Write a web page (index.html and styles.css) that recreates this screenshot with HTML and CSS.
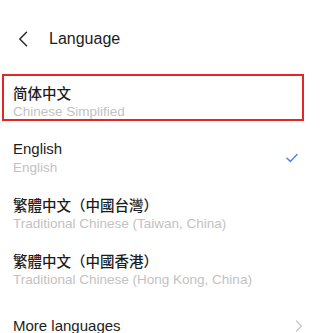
FILE: index.html
```html
<!DOCTYPE html>
<html lang="en">
<head>
<meta charset="utf-8">
<title>Language</title>
<link rel="stylesheet" href="styles.css">
</head>
<body>
<div class="screen">
  <header class="header">
    <svg class="back" width="10" height="16" viewBox="0 0 10 16" aria-hidden="true">
      <path d="M8.5 1.2 L1.8 8 L8.5 14.8" fill="none" stroke="#2a2a2a" stroke-width="1.5" stroke-linecap="round" stroke-linejoin="round"/>
    </svg>
    <h1 class="title">Language</h1>
  </header>
  <ul class="list">
    <li class="item">
      <div class="texts">
        <div class="name sc">简体中文</div>
        <div class="sub">Chinese Simplified</div>
      </div>
      <div class="highlight"></div>
    </li>
    <li class="item">
      <div class="texts">
        <div class="name">English</div>
        <div class="sub">English</div>
      </div>
      <svg class="check" width="12" height="10" viewBox="0 0 12 10" aria-hidden="true">
        <path d="M1 5.2 L4.4 8.4 L11 1.6" fill="none" stroke="#4f86e6" stroke-width="1.5" stroke-linecap="round" stroke-linejoin="round"/>
      </svg>
    </li>
    <li class="item">
      <div class="texts">
        <div class="name tc">繁體中文（中國台灣）</div>
        <div class="sub">Traditional Chinese (Taiwan, China)</div>
      </div>
    </li>
    <li class="item">
      <div class="texts">
        <div class="name tc">繁體中文（中國香港）</div>
        <div class="sub">Traditional Chinese (Hong Kong, China)</div>
      </div>
    </li>
    <li class="item more">
      <div class="texts">
        <div class="name">More languages</div>
      </div>
      <svg class="chev" width="8" height="12" viewBox="0 0 8 12" aria-hidden="true">
        <path d="M1.5 1 L6.5 6 L1.5 11" fill="none" stroke="#c8c8c8" stroke-width="1.3" stroke-linecap="round" stroke-linejoin="round"/>
      </svg>
    </li>
  </ul>
</div>
</body>
</html>
```

FILE: styles.css
```css
html, body {
  margin: 0;
  padding: 0;
  background: #ffffff;
}

body {
  font-family: "Liberation Sans", Arial, "Noto Sans CJK SC", sans-serif;
  color: #1f1f1f;
}

.screen {
  width: 312px;
  height: 333px;
  overflow: hidden;
}

.header {
  height: 74px;
  display: flex;
  align-items: flex-start;
  padding-top: 31px;
  box-sizing: border-box;
}

.back {
  margin-left: 18px;
  display: block;
}

.title {
  margin: -2px 0 0 21px;
  font-size: 16px;
  font-weight: normal;
  line-height: 20px;
  color: #1c1c1c;
}

.list {
  list-style: none;
  margin: 0;
  padding: 0;
}

.item {
  position: relative;
  display: flex;
  align-items: center;
  padding: 9px 14px 9px 13px;
  height: 38px;
}

.texts {
  flex: 1;
  min-width: 0;
}

.name {
  font-size: 15px;
  line-height: 20px;
  color: #1c1c1c;
  white-space: nowrap;
}

.sc {
  font-family: "Noto Sans CJK SC", "Liberation Sans", sans-serif;
  font-size: 14.5px;
  font-weight: 500;
}

.tc {
  font-family: "Noto Sans CJK TC", "Liberation Sans", sans-serif;
  font-size: 14.5px;
  font-weight: 500;
}

.sub {
  font-size: 13.5px;
  line-height: 18px;
  color: #c2c2c2;
  white-space: nowrap;
}

.highlight {
  position: absolute;
  left: 2px;
  top: 0;
  width: 302px;
  height: 47px;
  box-sizing: border-box;
  border: 2.5px solid #e32626;
  pointer-events: none;
}

.check {
  display: block;
  margin-top: -1px;
}

.more {
  padding-top: 18px;
  height: 20px;
  padding-right: 9px;
}

.chev {
  display: block;
}
```
